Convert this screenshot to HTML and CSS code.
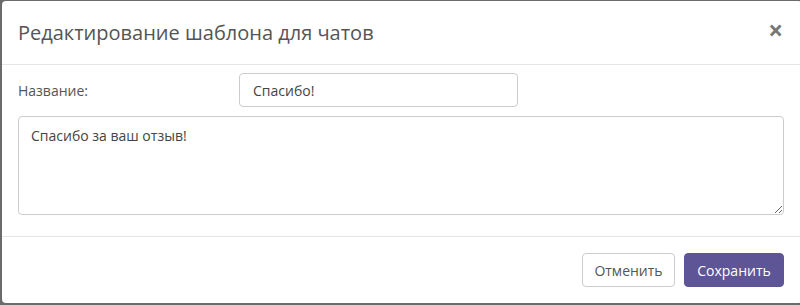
FILE: index.html
```html
<!DOCTYPE html>
<html lang="ru">
<head>
<meta charset="utf-8">
<link rel="stylesheet" href="styles.css">
</head>
<body>
<div class="backdrop">
  <div class="modal">
    <div class="modal-header">
      <h4 class="modal-title">Редактирование шаблона для чатов</h4>
      <span class="close">×</span>
    </div>
    <div class="modal-body">
      <div class="form-row">
        <label class="label">Название:</label>
        <input class="input" type="text" value="Спасибо!">
      </div>
      <textarea class="textarea">Спасибо за ваш отзыв!</textarea>
    </div>
    <div class="modal-footer">
      <button class="btn btn-default">Отменить</button>
      <button class="btn btn-primary">Сохранить</button>
    </div>
  </div>
</div>
</body>
</html>
```

FILE: styles.css
```css
html, body {
  margin: 0;
  padding: 0;
  background: #6b6b6b;
}
body {
  font-family: "Open Sans", "Liberation Sans", sans-serif;
  font-size: 14px;
  color: #333;
}
.backdrop {
  width: 800px;
  height: 305px;
  padding: 1px 0 0 2px;
  box-sizing: border-box;
}
.modal {
  background: #fff;
  width: 800px;
  height: 302px;
  border-radius: 4px;
  box-sizing: border-box;
  display: flex;
  flex-direction: column;
}
.modal-header {
  height: 63px;
  border-bottom: 1px solid #e5e5e5;
  display: flex;
  align-items: center;
  justify-content: space-between;
  padding: 0 19px 0 16px;
  box-sizing: content-box;
}
.modal-title {
  margin: 0;
  font-size: 20px;
  font-weight: 400;
  color: #555;
}
.close {
  font-size: 26px;
  font-weight: 700;
  color: #777;
  line-height: 1;
  margin-top: -5px;
}
.modal-body {
  padding: 8px 15px 0 16px;
  height: 163px;
  border-bottom: 1px solid #e5e5e5;
}
.form-row {
  display: flex;
  align-items: center;
  height: 34px;
  margin-bottom: 9px;
}
.label {
  width: 221px;
  color: #555;
}
.input {
  width: 279px;
  height: 34px;
  box-sizing: border-box;
  border: 1px solid #ccc;
  border-radius: 4px;
  padding: 0 13px;
  font-family: inherit;
  font-size: 14px;
  color: #444;
  outline: none;
}
.textarea {
  display: block;
  width: 766px;
  height: 99px;
  box-sizing: border-box;
  border: 1px solid #ccc;
  border-radius: 4px;
  padding: 9px 12px;
  font-family: inherit;
  font-size: 14px;
  color: #444;
  resize: vertical;
  outline: none;
}
.modal-footer {
  display: flex;
  justify-content: flex-end;
  gap: 9px;
  padding: 16px 18px 0 0;
}
.btn {
  height: 34px;
  border-radius: 4px;
  font-family: inherit;
  font-size: 14px;
  padding: 0;
  cursor: pointer;
}
.btn-default {
  width: 93px;
  background: #fff;
  border: 1px solid #ccc;
  color: #555;
}
.btn-primary {
  width: 100px;
  background: #5e5597;
  border: 1px solid #5e5597;
  color: #fff;
}
```
